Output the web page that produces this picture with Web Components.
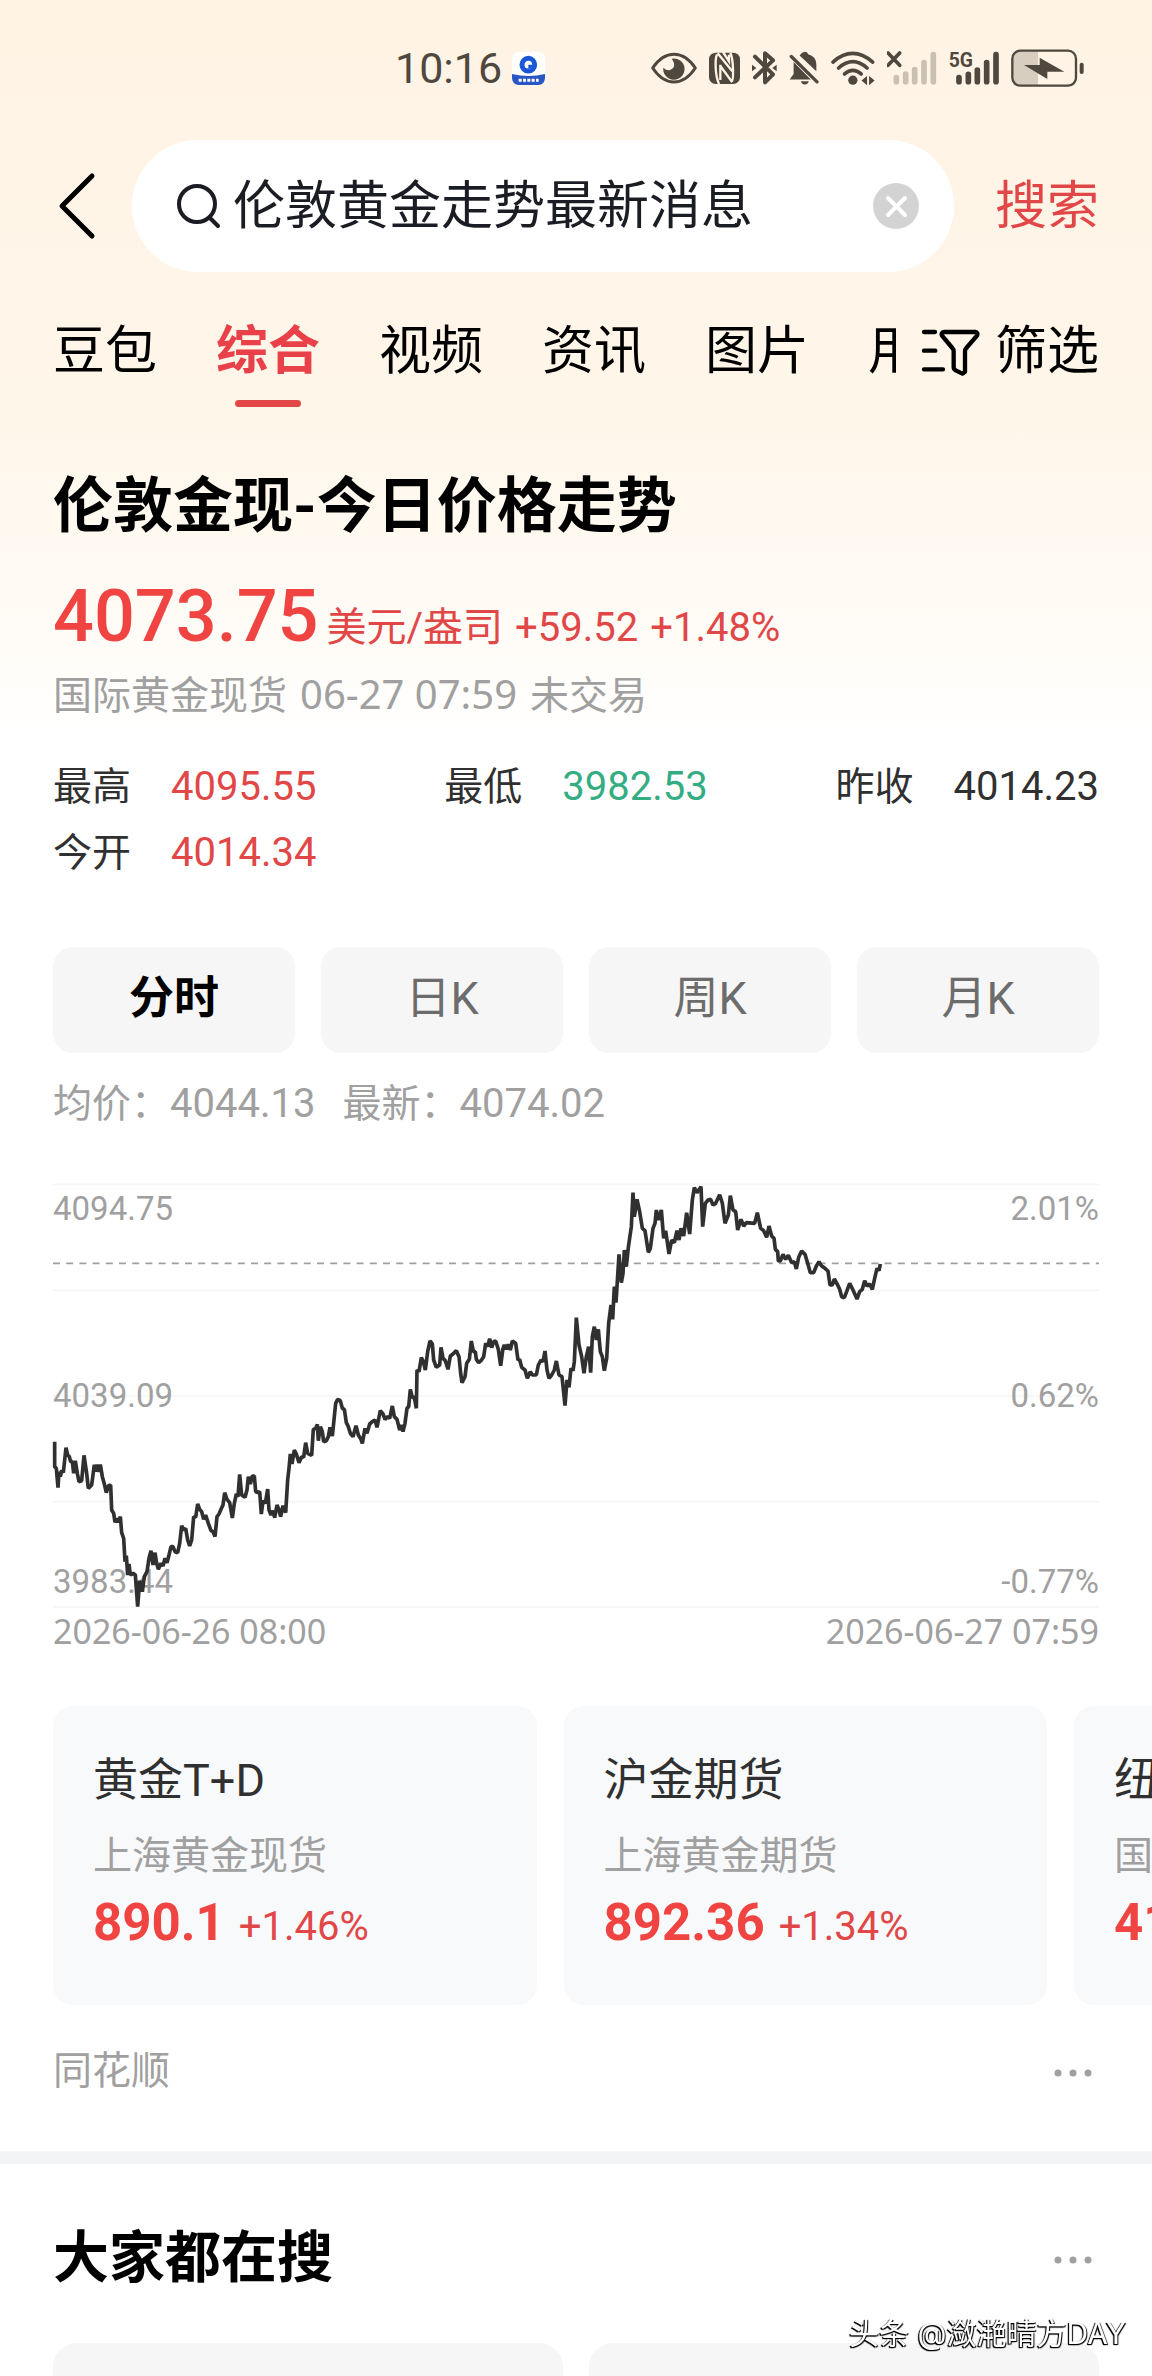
<!DOCTYPE html>
<html lang="zh-CN">
<head>
<meta charset="utf-8">
<meta name="viewport" content="width=device-width, initial-scale=1">
<title>伦敦黄金走势最新消息</title>
<style>
  html {
    height: 100%;
  }
  body {
    --red: #f04442;
    --muted: #a0a0a0;
    --edge: 53px;
    margin: 0;
    height: 100%;
    overflow: hidden;
    background: #fff;
    color: #000;
    font-family: Roboto, "Noto Sans CJK SC", sans-serif;
    font-size: 39px;
    line-height: 48px;
  }
</style>
</head>
<body>
<search-app></search-app>

<script>
customElements.define('status-bar', class StatusBar extends HTMLElement {
  constructor() {
    super();
    this.attachShadow({mode: 'open'});
    this.shadowRoot.innerHTML = this.template;
  }

  get template() {
    return `
<style>
  :host {
    display: flex;
    align-items: center;
    justify-content: space-between;
    height: 136px;
    padding: 0 68px 0 395px;
    color: #4f483f;
    font-size: 43px;
  }
  .left, .right {
    display: flex;
    align-items: center;
    gap: 10px;
  }
  .right {
    gap: 12px;
    fill: currentColor;
  }
  svg {
    display: block;
  }
  .line {
    fill: none;
    stroke: currentColor;
    stroke-linecap: round;
    stroke-linejoin: round;
  }
</style>

<div class="left">
  <span>10:16</span>
  <svg width="33" height="33" viewBox="0 0 99 99">
    <rect width="99" height="99" rx="20" fill="#fff"/>
    <path d="M0 66Q50 78 99 66V79Q97 99 79 99H20Q2 99 0 79Z" fill="#2a55c4"/>
    <circle cx="49" cy="38" r="19" fill="#fff" stroke="#1a56d6" stroke-width="15"/>
    <path d="M49 38h12a12 12 0 0 1-12 12z" fill="#1a56d6"/>
    <path d="M20 85h60" stroke="#fff" stroke-width="9" stroke-dasharray="9 4"/>
  </svg>
</div>
<div class="right">
  <svg width="46" height="38" viewBox="42 55 138 114">
    <path class="line" stroke-width="9" d="M47 112Q75 71 111 71T175 112Q147 154 111 154T47 112Z"/>
    <path d="M104 84a32 32 0 1 1-25 27q10 10 20 7q16-6 12-20q-2-8-7-14z"/>
  </svg>
  <svg width="31" height="38" viewBox="216 55 93 114">
    <rect x="216" y="66" width="93" height="94" rx="20"/>
    <path fill="none" stroke="#fff3e4" stroke-width="7" d="M240 72Q235 80 236 110T246 160M258 64L276 92V72M242 68L286 122M250 102V148M250 106L284 152Q289 150 288 115T280 66"/>
  </svg>
  <svg width="25" height="38" viewBox="343 55 75 114">
    <path class="line" stroke-width="12" stroke-linecap="butt" d="M352 78L406 131L382 155V68L406 89L352 140"/>
    <path d="M343 102l13 10-13 10zM417 102l-13 10 13 10z"/>
  </svg>
  <svg width="30" height="38" viewBox="446 55 91 114">
    <path d="M460 94L512 147H448L460 130ZM478 74Q486 63 494 63Q502 63 504 70Q529 76 529 102V122ZM482 152h24q-3 10-12 10t-12-10z"/>
    <path class="line" stroke-width="10" d="M453 77L531 154"/>
  </svg>
  <svg width="44" height="38" viewBox="573 55 133 114">
    <path class="line" stroke-width="11" d="M579 94Q638 42 699 94M596 112Q639 74 682 112M614 130Q639 108 664 130"/>
    <circle cx="639" cy="149" r="14"/>
    <path d="M682 136v28l-17-14zM688 136v28l17-14z"/>
  </svg>
  <svg width="50" height="38" viewBox="743 55 150 114">
    <path class="line" stroke-width="11" stroke-linecap="butt" d="M746 67l35 37M781 67l-35 37"/>
    <path class="line" stroke-width="17" opacity=".3" d="M771 141v12M799 130v23M826 117v36M854 96v57M882 72v81"/>
  </svg>
  <svg width="50" height="38" viewBox="927 55 150 114">
    <text x="926" y="109" font-family="Roboto" font-weight="700" font-size="58">5G</text>
    <path class="line" stroke-width="17" d="M957 141v12M985 131v22M1012 118v35M1040 96v57M1068 72v81"/>
  </svg>
  <svg width="73" height="38" viewBox="1113 55 219 114">
    <path d="M1118 80q0-19 20-19h56v104h-56q-20 0-20-19z" opacity=".22"/>
    <rect class="line" x="1117" y="60" width="191" height="105" rx="24" stroke-width="7"/>
    <path d="M1152 103h47V81l74 42h-51v22z"/>
    <rect x="1319" y="96" width="12" height="34" rx="6"/>
  </svg>
</div>
    `
  }
});

customElements.define('search-header', class SearchHeader extends HTMLElement {
  constructor() {
    super();
    this.attachShadow({mode: 'open'});
    this.shadowRoot.innerHTML = this.template;
  }

  get template() {
    return `
<style>
  :host {
    display: block;
    margin-top: 4px;
    padding: 0 var(--edge) 0 57px;
  }
  form {
    display: flex;
    align-items: center;
    margin: 0;
  }
  button {
    flex: none;
    padding: 0;
    border: 0;
    background: none;
    font: inherit;
  }
  svg {
    display: block;
    fill: none;
    stroke-linecap: round;
    stroke-linejoin: round;
  }
  .box {
    flex: 1;
    min-width: 0;
    display: flex;
    align-items: center;
    height: 132px;
    margin: 0 41px 0 35px;
    padding: 0 34px 0 44px;
    box-sizing: border-box;
    border-radius: 66px;
    background: #fff;
  }
  input {
    flex: 1;
    min-width: 0;
    margin: 0 12px;
    padding: 2px 0 0;
    border: 0;
    outline: 0;
    background: none;
    color: #1b1d24;
    font: inherit;
    font-size: 52px;
    line-height: 72px;
  }
  .go {
    padding-top: 2px;
    color: #e14747;
    font-size: 52px;
    line-height: 72px;
  }
</style>

<form>
  <button type="button" aria-label="返回">
    <svg width="40" height="68" viewBox="0 0 40 68" stroke="#000" stroke-width="5"><path d="M35 4L5 34L35 64"/></svg>
  </button>
  <div class="box">
    <svg width="45" height="46" viewBox="0 0 45 46" stroke="#1b1d24" stroke-width="4"><circle cx="21" cy="21" r="18"/><path d="M34 35L42 43"/></svg>
    <input type="text" value="伦敦黄金走势最新消息" aria-label="搜索内容">
    <button type="button" aria-label="清除">
      <svg width="47" height="47" viewBox="0 0 47 47" stroke="#fff" stroke-width="4"><circle cx="23" cy="23" r="23" fill="#d3d3d3" stroke="none"/><path d="M15 15L32 32M32 15L15 32"/></svg>
    </button>
  </div>
  <button class="go" type="submit">搜索</button>
</form>
    `
  }
});

customElements.define('search-tabs', class SearchTabs extends HTMLElement {
  constructor() {
    super();
    this.attachShadow({mode: 'open'});
    this.shadowRoot.innerHTML = this.template;
  }

  get template() {
    return `
<style>
  :host {
    display: flex;
    align-items: flex-start;
    padding: 50px var(--edge) 0;
    font-size: 52px;
    line-height: 60px;
  }
  nav {
    flex: 1;
    min-width: 0;
    display: flex;
    gap: 59px;
    overflow: hidden;
  }
  a {
    flex: none;
    display: flex;
    flex-direction: column;
    align-items: center;
    gap: 18px;
    color: #000;
    text-decoration: none;
  }
  a::after {
    content: "";
    width: 66px;
    height: 7px;
    border-radius: 4px;
  }
  a[aria-current] {
    color: #e9414a;
    font-weight: 700;
  }
  a[aria-current]::after {
    background: #e14747;
  }
  button {
    flex: none;
    display: flex;
    align-items: center;
    gap: 14px;
    margin-left: 25px;
    padding: 0;
    border: 0;
    background: none;
    color: #000;
    font: inherit;
  }
</style>

<nav>
  <a href="#">豆包</a>
  <a href="#" aria-current="page">综合</a>
  <a href="#">视频</a>
  <a href="#">资讯</a>
  <a href="#">图片</a>
  <a href="#">用户</a>
</nav>
<button type="button">
  <svg width="60" height="48" viewBox="183 52 180 144" fill="none" stroke="#000" stroke-width="13" stroke-linecap="round" stroke-linejoin="round">
    <path d="M192 64h33M192 120h34M192 176h57M253 64h93q9 1 5 11l-32 37q-4 4-4 10v61l-8 6-20-10q-6-3-6-9v-48q0-6-4-10l-31-37q-4-9 7-11z"/>
  </svg>
  筛选
</button>
    `
  }
});

customElements.define('quote-stat', class QuoteStat extends HTMLElement {
  constructor() {
    super();
    this.attachShadow({mode: 'open'});
    this.shadowRoot.innerHTML = this.template;
  }

  get template() {
    return `
<style>
  :host {
    display: flex;
    align-items: baseline;
    gap: 40px;
    color: #303030;
    line-height: 66px;
  }
  .value {
    font-size: 40px;
  }
  :host([trend="up"]) .value {
    color: #e14747;
  }
  :host([trend="down"]) .value {
    color: #35ad83;
  }
</style>
<slot name="label"></slot>
<span class="value"><slot></slot></span>
    `
  }
});

customElements.define('quote-panel', class QuotePanel extends HTMLElement {
  constructor() {
    super();
    this.attachShadow({mode: 'open'});
    this.shadowRoot.innerHTML = this.template;
  }

  get template() {
    return `
<style>
  :host {
    display: block;
    padding: 60px var(--edge) 0;
  }
  h1 {
    margin: 0;
    font-size: 60px;
    line-height: 80px;
    font-weight: 700;
  }
  .price {
    display: flex;
    align-items: baseline;
    gap: 8px;
    margin-top: 22px;
    color: #e14747;
  }
  .change {
    display: flex;
    gap: 12px;
    font-size: 40px;
  }
  strong {
    color: var(--red);
    font-size: 72px;
    line-height: 96px;
    font-weight: 500;
  }
  .time {
    display: flex;
    align-items: baseline;
    gap: 13px;
    margin-top: 5px;
    color: var(--muted);
  }
  .time time {
    font-family: "Noto Sans", sans-serif;
    font-size: 40px;
  }
  .stats {
    display: grid;
    grid-template-columns: repeat(3, max-content);
    justify-content: space-between;
    margin-top: 34px;
  }
</style>

<h1>伦敦金现-今日价格走势</h1>
<div class="price">
  <strong>4073.75</strong>
  <div class="change"><span>美元/盎司</span><span>+59.52</span><span>+1.48%</span></div>
</div>
<div class="time"><span>国际黄金现货</span><time>06-27 07:59</time><span>未交易</span></div>
<div class="stats">
  <quote-stat trend="up"><span slot="label">最高</span>4095.55</quote-stat>
  <quote-stat trend="down"><span slot="label">最低</span>3982.53</quote-stat>
  <quote-stat><span slot="label">昨收</span>4014.23</quote-stat>
  <quote-stat trend="up"><span slot="label">今开</span>4014.34</quote-stat>
</div>
    `
  }
});

customElements.define('period-tabs', class PeriodTabs extends HTMLElement {
  constructor() {
    super();
    this.attachShadow({mode: 'open'});
    this.shadowRoot.innerHTML = this.template;
  }

  get template() {
    return `
<style>
  :host {
    display: grid;
    grid-template-columns: repeat(4, 1fr);
    gap: 26px;
    margin: 61px var(--edge) 0;
  }
  button {
    height: 106px;
    padding: 0 0 2px;
    border: 0;
    border-radius: 20px;
    background: #f6f6f6;
    color: #6c6c6c;
    font: inherit;
    font-size: 45px;
  }
  button[aria-pressed="true"] {
    color: #000;
    font-weight: 700;
  }
</style>
<button type="button" aria-pressed="true">分时</button>
<button type="button">日K</button>
<button type="button">周K</button>
<button type="button">月K</button>
    `
  }
});

// x,y pairs of the minute line, in the units of the chart's viewBox
const minutes = `165,845 165,920 170,925 175,983 178,935 182,950 186,930 191,938 199,863 204,885 209,890 213,905 218,905
222,940 227,902 233,940 238,965 246,962 253,886 261,940 266,985 276,975 284,914 288,935 292,914 298,935 302,914 308,950
314,972 320,998 326,978 333,975 336,1050 342,1060 346,1087 352,1075 356,1087 362,1070 366,1118 372,1135 376,1205 380,1187
384,1245 388,1212 392,1245 400,1240 407,1245 414,1340 420,1262 428,1295 434,1250 442,1235 448,1195 454,1172 460,1215
466,1178 471,1210 476,1228 484,1210 490,1218 496,1195 502,1208 508,1185 514,1160 520,1160 526,1175 534,1178 540,1150
546,1097 552,1110 558,1105 564,1140 570,1158 576,1140 582,1070 588,1072 594,1032 600,1048 606,1055 612,1078 618,1065
626,1090 634,1112 640,1115 646,1130 652,1070 658,1062 664,1048 670,1035 675,998 682,1018 690,1028 698,1074 704,1030
710,1002 715,1010 720,943 726,1005 736,1012 742,990 746,950 752,972 758,948 764,948 768,995 774,998 780,995 785,1062
790,1022 797,1030 804,987 808,1050 814,1065 820,1052 825,1073 832,1035 838,1050 843,1070 850,1037 858,1058 864,960
868,925 872,882 877,912 884,870 890,882 898,908 906,890 912,892 918,848 924,880 936,886 941,808 948,805 953,793 956,842
962,800 968,815 972,845 980,842 986,830 991,802 998,828 1004,770 1008,730 1014,718 1022,722 1028,745 1034,748 1040,788
1046,800 1052,820 1060,830 1069,797 1076,825 1084,838 1088,850 1096,805 1102,820 1110,792 1118,785 1126,780 1132,802
1142,752 1150,762 1156,778 1164,770 1170,775 1178,738 1184,770 1192,778 1200,810 1206,795 1210,815 1216,790 1222,745
1227,740 1232,688 1238,712 1244,712 1250,745 1252,630 1258,635 1265,593 1271,605 1277,630 1284,575 1291,543 1298,552
1302,600 1310,622 1320,615 1324,562 1330,595 1337,602 1345,628 1352,588 1360,582 1370,572 1378,590 1383,640 1387,668
1396,650 1401,610 1409,598 1415,543 1421,575 1427,575 1430,598 1437,608 1444,602 1452,590 1458,550 1464,560 1470,536
1476,563 1482,545 1488,543 1496,568 1503,617 1510,565 1514,555 1520,568 1526,553 1532,570 1538,543 1548,550 1555,600
1560,598 1566,622 1576,630 1583,655 1592,635 1598,645 1610,645 1616,615 1624,600 1630,605 1636,573 1642,630 1648,655
1656,645 1664,630 1670,603 1678,645 1687,650 1696,737 1702,660 1708,682 1714,625 1720,632 1724,605 1730,473 1738,555
1746,590 1753,640 1760,590 1767,560 1773,638 1778,530 1784,500 1790,540 1796,508 1802,575 1808,590 1814,632 1821,595
1827,490 1834,435 1839,478 1844,380 1849,428 1858,283 1865,368 1870,340 1874,270 1880,320 1886,262 1895,200 1900,98
1904,170 1912,118 1920,155 1928,205 1936,212 1946,277 1952,265 1960,205 1966,190 1970,150 1976,180 1985,150 1992,235
1998,212 2008,282 2016,240 2024,248 2032,212 2038,240 2044,205 2052,228 2061,158 2070,222 2078,120 2084,83 2092,98
2104,80 2109,200 2117,130 2125,120 2133,118 2140,135 2148,130 2160,104 2168,130 2176,190 2186,165 2192,107 2200,150
2208,155 2214,210 2224,178 2232,198 2240,188 2265,190 2273,158 2283,205 2292,212 2301,232 2308,198 2316,228 2323,235
2327,268 2334,275 2336,303 2342,303 2350,283 2358,298 2366,286 2376,308 2384,305 2390,327 2397,292 2406,273 2416,283
2424,310 2432,338 2442,338 2450,318 2458,305 2466,318 2476,325 2485,333 2491,375 2498,375 2504,357 2514,375 2520,388
2526,410 2534,413 2542,392 2550,370 2560,390 2572,417 2580,395 2588,388 2595,362 2602,378 2610,372 2618,388 2625,355
2632,325 2638,332 2642,312`;

customElements.define('minute-chart', class MinuteChart extends HTMLElement {
  constructor() {
    super();
    this.attachShadow({mode: 'open'});
    this.shadowRoot.innerHTML = this.template;
  }

  get template() {
    return `
<style>
  :host {
    display: block;
    margin: 27px var(--edge) 0;
    color: var(--muted);
  }
  .legend {
    display: flex;
    gap: 27px;
  }
  .legend span span {
    font-size: 40px;
  }
  .plot {
    display: grid;
    grid-template-rows: 424px;
    margin-top: 56px;
  }
  .plot > * {
    grid-area: 1 / 1;
  }
  svg {
    width: 100%;
    height: 100%;
    overflow: visible;
  }
  .scale {
    display: flex;
    flex-direction: column;
    justify-content: space-between;
    padding: 5px 0 6px;
    font-size: 33px;
    line-height: 40px;
  }
  .scale div, .dates {
    display: flex;
    justify-content: space-between;
  }
  .dates {
    margin-top: 3px;
    font-family: "Noto Sans", sans-serif;
    font-size: 34px;
    line-height: 40px;
  }
</style>

<div class="legend"><span>均价：<span>4044.13</span></span><span>最新：<span>4074.02</span></span></div>
<div class="plot">
  <svg viewBox="160 72 3138 1272" preserveAspectRatio="none" fill="none">
    <path d="M160 73H3298M160 391H3298M160 708H3298M160 1025H3298M160 1341H3298" stroke="#f5f5f5" stroke-width="5"/>
    <path d="M160 310H3298" stroke="#a0a0a0" stroke-width="5" stroke-dasharray="21 18.6"/>
  </svg>
  <div class="scale">
    <div><span>4094.75</span><span>2.01%</span></div>
    <div><span>4039.09</span><span>0.62%</span></div>
    <div><span>3983.44</span><span>-0.77%</span></div>
  </div>
  <svg viewBox="160 72 3138 1272" preserveAspectRatio="none" fill="none">
    <polyline points="${minutes}" stroke="#303030" stroke-width="11" stroke-linejoin="bevel"/>
  </svg>
</div>
<div class="dates"><time>2026-06-26 08:00</time><time>2026-06-27 07:59</time></div>
    `
  }
});

customElements.define('market-card', class MarketCard extends HTMLElement {
  constructor() {
    super();
    this.attachShadow({mode: 'open'});
    this.shadowRoot.innerHTML = this.template;
  }

  get template() {
    return `
<style>
  :host {
    flex: none;
    display: block;
    box-sizing: border-box;
    width: 44%;
    height: 299px;
    padding: 45px 40px 0;
    border-radius: 20px;
    background: #f8f9fb;
    white-space: nowrap;
  }
  h3 {
    margin: 0;
    color: #303030;
    font-size: 45px;
    line-height: 60px;
    font-weight: 400;
  }
  p {
    margin: 21px 0 0;
    color: var(--muted);
  }
  div {
    display: flex;
    align-items: baseline;
    gap: 14px;
    margin-top: 13px;
    color: #e14747;
    font-size: 40px;
  }
  strong {
    color: var(--red);
    font-size: 51px;
    line-height: 60px;
    font-weight: 700;
  }
</style>
<h3><slot name="title"></slot></h3>
<p><slot></slot></p>
<div><strong><slot name="price"></slot></strong><slot name="change"></slot></div>
    `
  }
});

customElements.define('more-button', class MoreButton extends HTMLElement {
  constructor() {
    super();
    this.attachShadow({mode: 'open'});
    this.shadowRoot.innerHTML = this.template;
  }

  get template() {
    return `
<style>
  :host {
    display: block;
  }
  button {
    display: block;
    padding: 0 7px;
    border: 0;
    background: none;
  }
  svg {
    display: block;
  }
</style>
<button type="button" aria-label="更多">
  <svg width="38" height="48" viewBox="0 0 38 48" fill="#a0a0a0"><circle cx="4" cy="26" r="3.5"/><circle cx="19" cy="26" r="3.5"/><circle cx="34" cy="26" r="3.5"/></svg>
</button>
    `
  }
});

customElements.define('search-app', class SearchApp extends HTMLElement {
  constructor() {
    super();
    this.attachShadow({mode: 'open'});
    this.shadowRoot.innerHTML = this.template;
  }

  get template() {
    return `
<style>
  :host {
    display: block;
    background: linear-gradient(#fff3e4, #fff6ea 420px, #fffaf2 570px, #fff 740px);
  }
  .cards {
    display: flex;
    gap: 27px;
    margin-top: 55px;
    padding-left: var(--edge);
    overflow: hidden;
  }
  .source, .heading {
    display: flex;
    align-items: center;
    justify-content: space-between;
    padding: 0 var(--edge);
  }
  .source {
    padding-top: 42px;
    padding-bottom: 56px;
    color: var(--muted);
    border-bottom: 13px solid #f3f4f6;
  }
  .heading {
    padding-top: 54px;
  }
  h2 {
    margin: 0;
    font-size: 56px;
    line-height: 80px;
    font-weight: 700;
  }
  .words {
    display: grid;
    grid-template-columns: 1fr 1fr;
    gap: 26px;
    padding: 45px var(--edge) 0;
  }
  .words div {
    height: 106px;
    border-radius: 24px;
    background: #f6f6f6;
  }
  .mark {
    position: fixed;
    right: 26px;
    bottom: 19px;
    color: #fff;
    font-family: Inter, "Noto Sans CJK SC", sans-serif;
    font-size: 30px;
    text-shadow: -1px 1px 1px #000, -1px 1px 1px #000, 1px 1px 1px #000;
  }
</style>

<status-bar></status-bar>
<search-header></search-header>
<search-tabs></search-tabs>
<main>
  <quote-panel></quote-panel>
  <period-tabs></period-tabs>
  <minute-chart></minute-chart>
  <div class="cards">
    <market-card><span slot="title">黄金T+D</span>上海黄金现货<span slot="price">890.1</span><span slot="change">+1.46%</span></market-card>
    <market-card><span slot="title">沪金期货</span>上海黄金期货<span slot="price">892.36</span><span slot="change">+1.34%</span></market-card>
    <market-card><span slot="title">纽</span>国<span slot="price">41</span></market-card>
  </div>
  <div class="source"><span>同花顺</span><more-button></more-button></div>
  <section>
    <div class="heading"><h2>大家都在搜</h2><more-button></more-button></div>
    <div class="words"><div></div><div></div></div>
  </section>
</main>
<div class="mark">头条 @潋滟晴方DAY</div>
    `
  }
});
</script>
</body>
</html>
